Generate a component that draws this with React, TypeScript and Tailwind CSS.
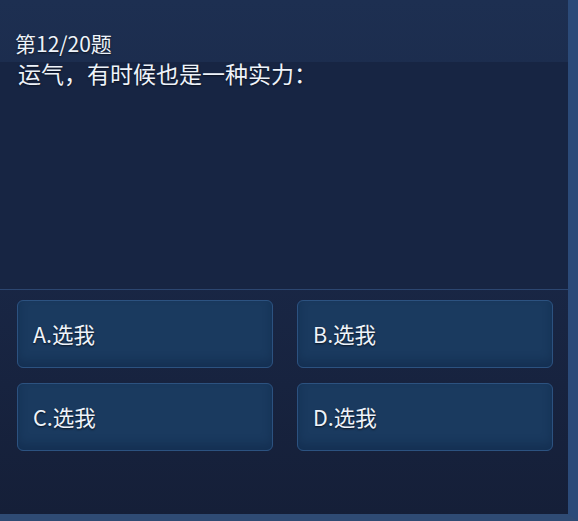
export default function App() {
  const options = ['A.选我', 'B.选我', 'C.选我', 'D.选我'];

  return (
    <div
      className="w-[578px] h-[521px] flex flex-col bg-gradient-to-b from-[#1d2f51] via-[#192746] to-[#151f38] border-r-[10px] border-b-[7px] border-r-[#2b4a78] border-b-[#2f4b74] text-[#eef3fa]"
      style={{ fontFamily: '"Noto Sans CJK SC", "Noto Sans", sans-serif' }}
    >
      {/* Header */}
      <div className="h-[62px] shrink-0 flex items-end pl-[15px] pb-[6px]">
        <span className="text-[21px] leading-[26px] [text-shadow:0_1px_2px_rgba(0,0,0,0.6)]">第12/20题</span>
      </div>

      {/* Question */}
      <div className="h-[228px] shrink-0 bg-[#172543] border-b border-[#2c4670] pl-[18px]">
        <div className="text-[23px] leading-[28px] -mt-[3px] [text-shadow:0_1px_2px_rgba(0,0,0,0.6)]">运气，有时候也是一种实力：</div>
      </div>

      {/* Options */}
      <div className="grid grid-cols-[256px_256px] gap-x-[24px] gap-y-[15px] pl-[17px] pt-[10px]">
        {options.map((opt) => (
          <button
            key={opt}
            className="h-[68px] rounded-[6px] bg-[#1a3a5f] border border-[#2c5280] flex items-center pl-[15px] text-[21.5px] text-[#eef3fa] [text-shadow:0_1px_2px_rgba(0,0,0,0.7)] shadow-[inset_0_-6px_10px_rgba(10,30,60,0.35)]"
          >
            {opt}
          </button>
        ))}
      </div>
    </div>
  );
}
